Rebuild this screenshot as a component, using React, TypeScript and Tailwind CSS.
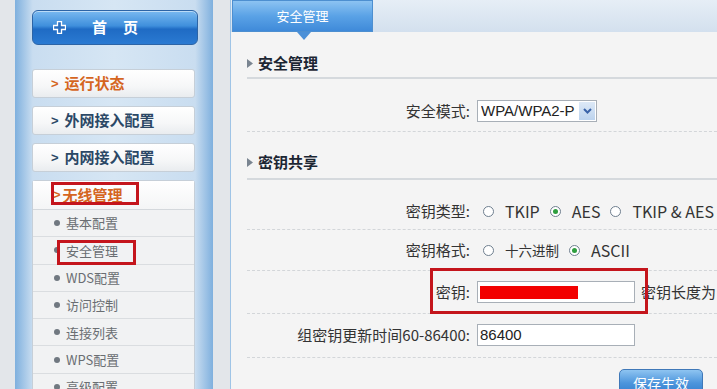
const cjk = { fontFamily: '"Noto Sans CJK SC", "Noto Sans", sans-serif' };
const arial = { fontFamily: '"Liberation Sans", Arial, sans-serif' };

const menus = [
  { label: "运行状态", active: true },
  { label: "外网接入配置" },
  { label: "内网接入配置" },
];

const subs = ["基本配置", "安全管理", "WDS配置", "访问控制", "连接列表", "WPS配置", "高级配置"];

function Radio({ checked, label, first, small }: { checked?: boolean; label: string; first?: boolean; small?: boolean }) {
  return (
    <span className={`flex items-center ${first ? "" : "ml-[10px]"}`}>
      <span className="inline-flex h-[11px] w-[11px] items-center justify-center rounded-full border border-[#6f7f8f] bg-white">
        {checked && <span className="h-[5px] w-[5px] rounded-full bg-[#2e9e3e]" />}
      </span>
      <span className={`ml-[11px] ${small ? "text-[13.5px]" : "text-[16px]"}`}>{label}</span>
    </span>
  );
}

function Sidebar() {
  return (
    <div className="ml-[15px] flex w-[198px] shrink-0 flex-col bg-[linear-gradient(90deg,#7fb0de_0%,#c9ddf0_9%,#d6e6f4_50%,#c9ddf0_91%,#7fb0de_100%)] pl-[17px] pr-[15px] pt-[10px]">
      <div className="flex h-[35px] w-[166px] shrink-0 items-center rounded-[6px] border border-[#2c64a6] bg-[linear-gradient(180deg,#79b9f0_0%,#3f8fdc_45%,#1f6bc4_55%,#2a7ad2_100%)] pl-[20px] text-white shadow-[inset_0_1px_0_rgba(255,255,255,0.5)]">
        <svg width="13" height="13" viewBox="0 0 13 13">
          <path d="M4.5 0.5h4v4h4v4h-4v4h-4v-4h-4v-4h4z" fill="#2a6fc0" stroke="#fff" strokeWidth="1.3" />
        </svg>
        <span style={cjk} className="ml-[26px] text-[15px] font-bold tracking-[16px]">首页</span>
      </div>

      <div className="mt-[24px] flex shrink-0 flex-col gap-[8px]">
        {menus.map((m) => (
          <div
            key={m.label}
            className="flex h-[29px] w-[163px] shrink-0 items-center rounded-[3px] border border-[#c6cfd8] bg-[linear-gradient(180deg,#ffffff_0%,#f6f7f8_60%,#e9ecef_100%)] pl-[18px]"
          >
            <span className={`text-[13px] font-bold ${m.active ? "text-[#d5651f]" : "text-[#2b4866]"}`} style={arial}>
              &gt;
            </span>
            <span style={cjk} className={`ml-[6px] text-[15px] font-bold ${m.active ? "text-[#d5651f]" : "text-[#2b4866]"}`}>
              {m.label}
            </span>
          </div>
        ))}

        <div className="relative w-[163px] shrink-0 rounded-t-[3px] border border-[#c6cfd8] bg-[#f1f2f3]">
          <div className="flex h-[29px] items-center border-b border-[#d4d8dc] bg-[linear-gradient(180deg,#ffffff_0%,#f4f5f6_100%)] pl-[20px]">
            <span className="text-[13px] font-bold text-[#d5651f]" style={arial}>&gt;</span>
            <span style={cjk} className="ml-[2px] text-[15px] font-bold text-[#d5651f]">无线管理</span>
          </div>
          {subs.map((s) => (
            <div key={s} className="flex h-[27.3px] items-center border-b border-[#dadde0] pl-[21px]">
              <span className="h-[6px] w-[6px] rounded-full bg-[#707880]" />
              <span style={cjk} className="ml-[6px] text-[13px] text-[#6a6e72]">{s}</span>
            </div>
          ))}
          <div className="pointer-events-none absolute left-[18px] top-[1px] h-[23px] w-[88px] border-[3px] border-[#c4151c]" />
          <div className="pointer-events-none absolute left-[24px] top-[59px] h-[25px] w-[79px] border-[3px] border-[#c4151c]" />
        </div>
      </div>
    </div>
  );
}

function Row({ label, children, className }: { label: string; children: React.ReactNode; className: string }) {
  return (
    <div className={`flex items-center border-b border-dashed border-[#d3d6d9] ${className}`}>
      <div style={cjk} className="w-[223px] text-right text-[15px] leading-[20px] text-[#333]">{label}</div>
      <div className="ml-[7px] flex items-center">{children}</div>
    </div>
  );
}

function Header({ title, className }: { title: string; className: string }) {
  return (
    <div className={`flex items-center border-b-2 border-[#d5d9dd] ${className}`}>
      <svg width="6" height="9" viewBox="0 0 6 9"><path d="M0 0l6 4.5L0 9z" fill="#7a8591" /></svg>
      <span style={cjk} className="ml-[5px] text-[15px] font-bold leading-[20px] text-[#1c2633]">{title}</span>
    </div>
  );
}

export default function App() {
  return (
    <div className="flex h-[389px] w-[717px] overflow-hidden bg-[#e3e6ea]">
      <Sidebar />
      <div className="ml-[17px] flex flex-1 flex-col border-l border-[#9fc4e6] bg-[#f4f4f4]">
        <div className="relative h-[32px] shrink-0 bg-[linear-gradient(180deg,#e6eef6_0%,#d3e0ee_100%)]">
          <div className="absolute left-[1px] top-0 flex h-[32px] w-[141px] items-center justify-center border border-[#4d8fd0] bg-[linear-gradient(180deg,#8cc3f2_0%,#5aa2e6_50%,#3f8ad9_100%)]">
            <span style={cjk} className="text-[13px] text-white">安全管理</span>
          </div>
          <div className="absolute left-[66px] top-[32px] h-0 w-0 border-x-[7px] border-t-[8px] border-x-transparent border-t-[#4b90d8]" />
        </div>

        <div className="relative flex flex-col pl-[16px]">
          <Header title="安全管理" className="pb-[4px] pt-[21px]" />
          <Row label="安全模式:" className="pb-[9px] pt-[21px]">
            <div className="flex h-[22px] w-[120px] items-center border border-[#a8afb7] bg-white pl-[3px]">
              <span style={arial} className="w-[94px] shrink-0 overflow-hidden whitespace-nowrap text-[15px] text-[#222]">WPA/WPA2-PSK</span>
              <span className="ml-auto mr-[1px] flex h-[18px] w-[16px] items-center justify-center bg-[linear-gradient(180deg,#dde9f7,#bcd3ee)]">
                <svg width="9" height="6" viewBox="0 0 9 6"><path d="M1 1l3.5 3.5L8 1" fill="none" stroke="#3a63a8" strokeWidth="2" /></svg>
              </span>
            </div>
          </Row>
          <Header title="密钥共享" className="pb-[6px] pt-[20px]" />
          <Row label="密钥类型:" className="pb-[8px] pt-[21px]">
            <div style={cjk} className="flex items-center pl-[6px] leading-[20px] text-[#333]">
              <Radio first label="TKIP" />
              <Radio checked label="AES" />
              <Radio label="TKIP & AES" />
            </div>
          </Row>
          <Row label="密钥格式:" className="py-[10px]">
            <div style={cjk} className="flex items-center pl-[6px] leading-[20px] text-[#333]">
              <Radio first small label="十六进制" />
              <Radio checked label="ASCII" />
            </div>
          </Row>
          <Row label="密钥:" className="py-[10px]">
            <div className="flex h-[22px] w-[158px] items-center border border-[#a8afb7] bg-white pl-[2px]">
              <div className="h-[13px] w-[98px] bg-[#f20000]" />
            </div>
            <span style={cjk} className="ml-[6px] whitespace-nowrap text-[15px] leading-[20px] text-[#333]">密钥长度为</span>
          </Row>
          <Row label="组密钥更新时间60-86400:" className="pb-[11px] pt-[10px]">
            <div className="flex h-[22px] w-[158px] items-center border border-[#a8afb7] bg-white pl-[2px]">
              <span style={arial} className="text-[15px] text-[#222]">86400</span>
            </div>
          </Row>
          <div className="flex justify-end pr-[14px] pt-[11px]">
            <div className="flex h-[28px] w-[84px] items-center justify-center rounded-[5px] border border-[#3f78b8] bg-[linear-gradient(180deg,#8ec4f1_0%,#4d95dc_50%,#2f7bcc_100%)]">
              <span style={cjk} className="text-[14px] leading-[20px] text-white">保存生效</span>
            </div>
          </div>
          <div className="pointer-events-none absolute left-[199px] top-[236px] h-[46px] w-[218px] border-[3px] border-[#c4151c]" />
        </div>
      </div>
    </div>
  );
}
